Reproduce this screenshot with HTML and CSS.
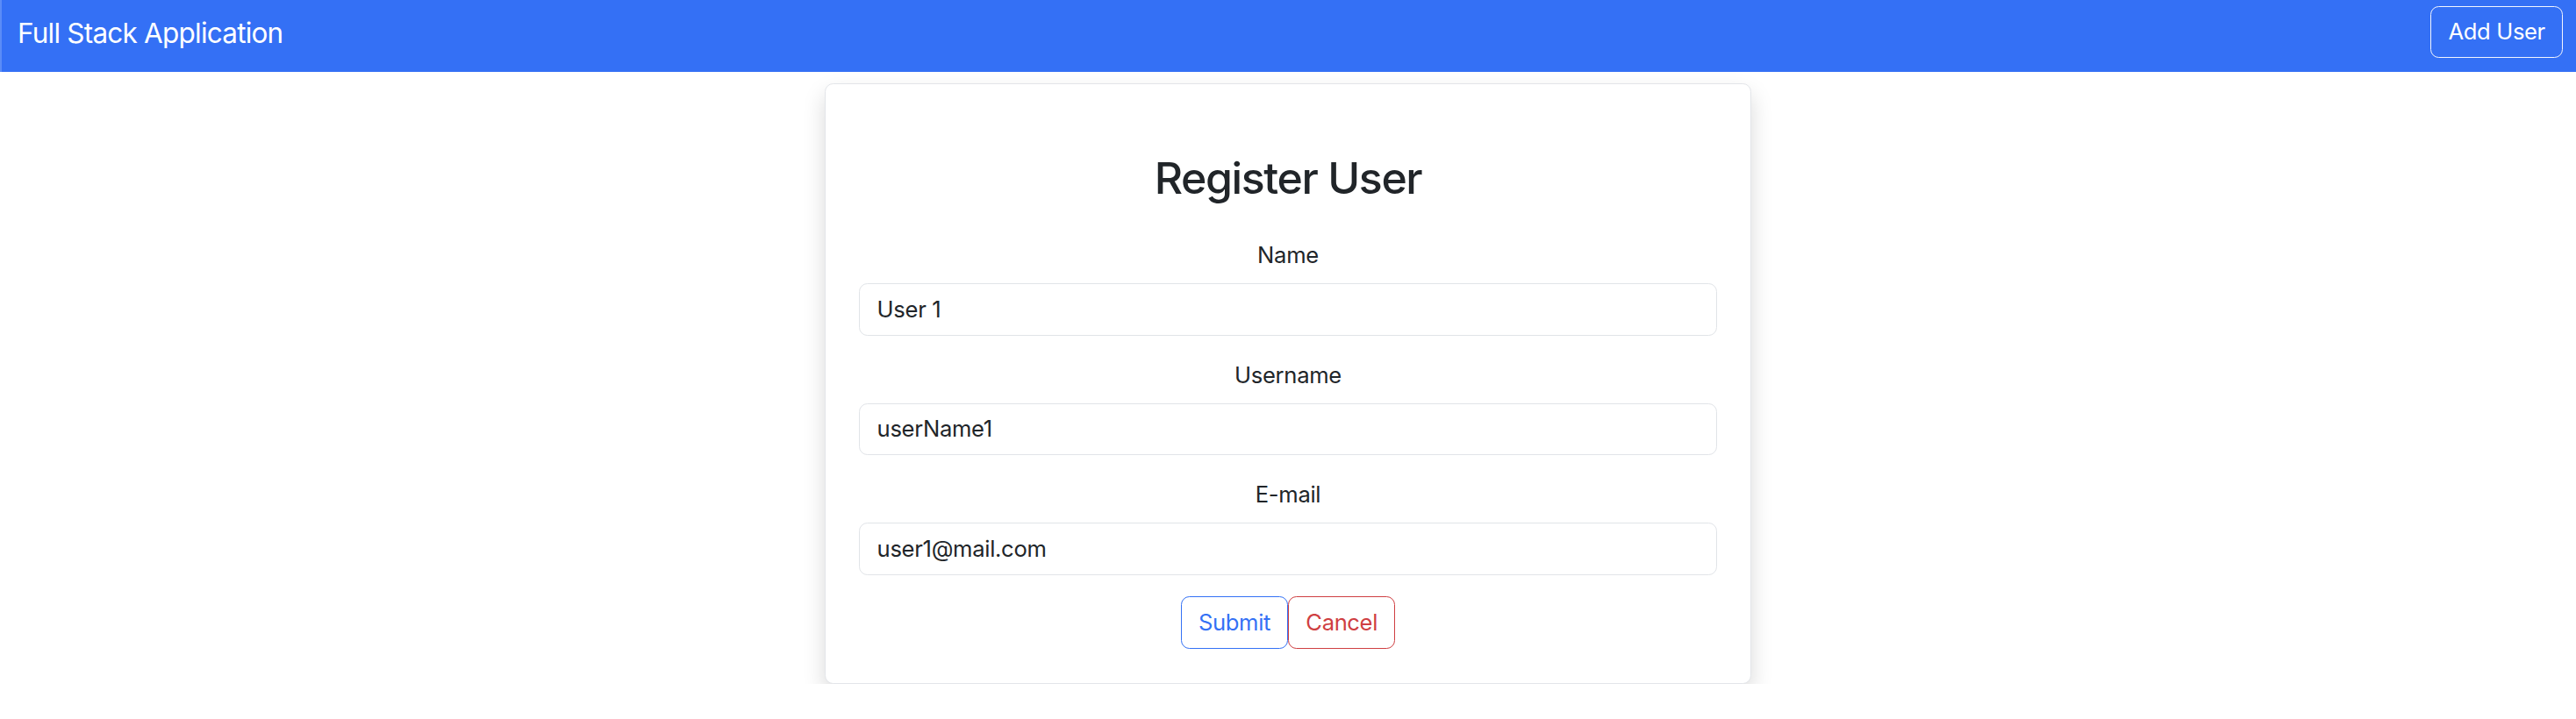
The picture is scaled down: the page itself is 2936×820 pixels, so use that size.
FILE: index.html
```html
<!DOCTYPE html>
<html lang="en">
<head>
<meta charset="utf-8">
<title>Full Stack Application</title>
<link rel="stylesheet" href="styles.css">
</head>
<body>
<nav class="navbar">
  <a class="brand" href="#">Full Stack Application</a>
  <button class="btn btn-light-outline" type="button">Add User</button>
</nav>
<main class="container">
  <div class="card">
    <h2 class="title">Register User</h2>
    <form class="form">
      <div class="field">
        <label class="label" for="name">Name</label>
        <input class="input" id="name" type="text" value="User 1">
      </div>
      <div class="field">
        <label class="label" for="username">Username</label>
        <input class="input" id="username" type="text" value="userName1">
      </div>
      <div class="field">
        <label class="label" for="email">E-mail</label>
        <input class="input" id="email" type="text" value="user1@mail.com">
      </div>
      <div class="actions"><button class="btn btn-primary-outline" type="submit">Submit</button><button class="btn btn-danger-outline" type="button">Cancel</button></div>
    </form>
  </div>
</main>
</body>
</html>
```

FILE: styles.css
```css
* {
  box-sizing: border-box;
}

body {
  margin: 0;
  font-family: Inter, "Noto Sans", "Liberation Sans", sans-serif;
  font-size: 25.6px;
  line-height: 1.5;
  letter-spacing: -0.012em;
  color: #212529;
  background: #ffffff;
}

.navbar {
  height: 82px;
  display: flex;
  align-items: center;
  justify-content: space-between;
  padding: 7px 15px 16px 18px;
  background: #3470f5;
  border-left: 2px solid #5b8cf7;
}

.brand {
  color: #ffffff;
  text-decoration: none;
  font-size: 31.5px;
  line-height: 1.5;
  letter-spacing: -0.025em;
  margin-top: 2px;
}

.btn {
  font-family: inherit;
  font-size: 25.6px;
  line-height: 1.5;
  letter-spacing: -0.015em;
  padding: 9px 19.2px;
  border-radius: 9.6px;
  background: transparent;
  cursor: pointer;
}

.btn-light-outline {
  color: #ffffff;
  border: 1.5px solid #f2f5fe;
  height: 59px;
  padding-top: 0;
  padding-bottom: 0;
}

.container {
  display: flex;
  justify-content: center;
  padding-top: 13px;
}

.card {
  width: 1056px;
  padding: 38.4px;
  border: 1px solid #e3e5e9;
  border-radius: 9.6px;
  box-shadow: 0 12.8px 25.6px rgba(0, 0, 0, 0.15);
  background: #ffffff;
}

.title {
  margin: 38.4px 38.4px 39.5px;
  font-size: 50px;
  font-weight: 500;
  line-height: 1.2;
  letter-spacing: -0.028em;
  text-align: center;
}

.form {
  display: flex;
  flex-direction: column;
}

.field {
  display: flex;
  flex-direction: column;
  margin-bottom: 25.6px;
}

.label {
  text-align: center;
  margin-bottom: 12.8px;
}

.input {
  width: 100%;
  font-family: inherit;
  font-size: 25.6px;
  line-height: 1.5;
  letter-spacing: -0.012em;
  color: #212529;
  padding: 9.6px 19.2px;
  border: 1.5px solid #e1e4e8;
  border-radius: 9.6px;
  background: #ffffff;
}

.actions {
  display: flex;
  justify-content: center;
  margin-top: -1px;
}

.btn-primary-outline {
  color: #3471f5;
  border: 1.6px solid #3471f5;
  height: 60px;
  padding-top: 0;
  padding-bottom: 0;
}

.btn-danger-outline {
  color: #cf3f42;
  border: 1.6px solid #cf3f42;
  height: 60px;
  padding-top: 0;
  padding-bottom: 0;
}
```
